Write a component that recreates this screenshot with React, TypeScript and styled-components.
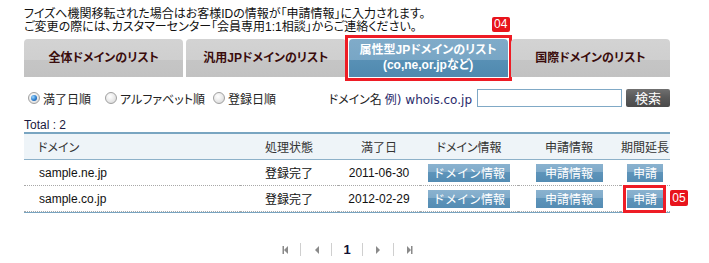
import React from "react";
import styled, { createGlobalStyle } from "styled-components";

const GlobalStyle = createGlobalStyle`
  html, body { margin: 0; padding: 0; background: #fff; }
  body {
    font-family: "Liberation Sans", "Noto Sans CJK JP", sans-serif;
    font-size: 12px;
    color: #222;
    font-feature-settings: "palt";
  }
`;

const Page = styled.div`
  width: 646px;
  padding: 8px 0 0 24px;
`;

const Notice = styled.p`
  margin: 0;
  line-height: 13px;
  color: #111;
`;

const Tabs = styled.div`
  display: grid;
  grid-template-columns: repeat(4, 1fr);
  gap: 3px;
  margin-top: 5px;
  height: 38px;
`;

const Tab = styled.div<{ $active?: boolean }>`
  position: relative;
  display: flex;
  flex-direction: column;
  align-items: center;
  justify-content: center;
  border-radius: 4px 4px 0 0;
  font-weight: bold;
  font-size: 12px;
  line-height: 15px;
  color: ${(p) => (p.$active ? "#fff" : "#3a0c0c")};
  background: ${(p) =>
    p.$active
      ? "linear-gradient(#80abc9 0%, #78a6c5 56%, #5890b5 56%, #4f89af 100%)"
      : "linear-gradient(#d3d3d3 0%, #cfcfcf 56%, #c5c5c5 56%, #c2c2c2 100%)"};

  ${(p) =>
    p.$active &&
    `
    &::after {
      content: "";
      position: absolute;
      inset: -4px;
      border: 3px solid #ee1c25;
      pointer-events: none;
    }
  `}
`;

const Badge = styled.span`
  position: absolute;
  height: 15px;
  padding: 0 2px;
  min-width: 14px;
  text-align: center;
  line-height: 15px;
  font-family: "Liberation Sans", sans-serif;
  font-size: 12px;
  font-weight: normal;
  color: #fff;
  background: #e8141c;
  border-radius: 2px;
  z-index: 2;
`;

const TabBadge = styled(Badge)`
  top: -22px;
  right: -2px;
`;

const Controls = styled.div`
  display: flex;
  align-items: center;
  height: 18px;
  margin-top: 12px;
  padding-left: 4px;
`;

const RadioGroup = styled.div`
  display: grid;
  grid-template-columns: 77px 108px auto;
  align-items: center;
`;

const RadioLabel = styled.label`
  display: flex;
  align-items: center;
  gap: 3px;
  color: #222;
  white-space: nowrap;
`;

const RadioDot = styled.span<{ $checked?: boolean }>`
  position: relative;
  width: 12px;
  height: 12px;
  box-sizing: border-box;
  border-radius: 50%;
  border: 1px solid #a0a0a0;
  background: radial-gradient(circle at 40% 35%, #ffffff 0%, #e6e6e6 60%, #cfcfcf 100%);

  ${(p) =>
    p.$checked &&
    `
    &::after {
      content: "";
      position: absolute;
      left: 2px;
      top: 2px;
      width: 6px;
      height: 6px;
      border-radius: 50%;
      background: radial-gradient(circle at 35% 35%, #9ed8ff 0%, #2c7ccc 55%, #124f96 100%);
    }
  `}
`;

const SearchArea = styled.div`
  margin-left: auto;
  display: flex;
  align-items: center;
`;

const DomainLabel = styled.span`
  margin-right: 5px;
  color: #222;
  white-space: nowrap;
`;

const Example = styled.span`
  margin-left: 3px;
  font-family: "DejaVu Sans", "Noto Sans CJK JP", sans-serif;
  font-size: 12px;
  color: #2b2b6b;
`;

const SearchInput = styled.input`
  width: 145px;
  height: 18px;
  box-sizing: border-box;
  border: 1px solid #80a9c6;
  margin: 0 4px 0 0;
  padding: 0 3px;
  outline: none;
`;

const SearchButton = styled.button`
  width: 44px;
  height: 18px;
  padding: 0;
  border: none;
  border-radius: 2px;
  background: linear-gradient(#707070 0%, #5a5a5a 45%, #4a4a4a 100%);
  color: #fff;
  font-family: "Noto Sans CJK JP", sans-serif;
  font-size: 13px;
  line-height: 18px;
`;

const Total = styled.div`
  margin-top: 11px;
  line-height: 14px;
  color: #1a1a40;
`;

const Table = styled.table`
  width: 646px;
  table-layout: fixed;
  border-collapse: separate;
  border-spacing: 0;
  border-top: 2px solid #79a5c1;
  border-bottom: 1px solid #79a5c1;
`;

const Th = styled.th<{ $left?: boolean }>`
  height: 25px;
  padding: ${(p) => (p.$left ? "0 0 0 14px" : "0")};
  text-align: ${(p) => (p.$left ? "left" : "center")};
  font-weight: normal;
  color: #333;
  background: #eef4f8;
  border-bottom: 1px solid #8db1c9;
`;

const Td = styled.td<{ $left?: boolean }>`
  height: 25px;
  padding: ${(p) => (p.$left ? "0 0 0 15px" : "0")};
  text-align: ${(p) => (p.$left ? "left" : "center")};
  color: #111;
  border-bottom: 1px dotted #a8a8a8;
  vertical-align: middle;
`;

const Mark = styled.span<{ $marked?: boolean }>`
  position: relative;
  display: inline-block;
  vertical-align: middle;
  line-height: 0;

  ${(p) =>
    p.$marked &&
    `
    &::after {
      content: "";
      position: absolute;
      left: -4px;
      right: -3px;
      top: -5px;
      bottom: -5px;
      border: 3px solid #ee1c25;
      pointer-events: none;
    }
  `}
`;

const RowBadge = styled(Badge)`
  left: calc(100% + 7px);
  top: 0;
  height: 16px;
  line-height: 16px;
`;

const ActionButton = styled.button<{ $w: number }>`
  width: ${(p) => p.$w}px;
  height: 18px;
  padding: 0;
  border: none;
  background: linear-gradient(#8ab2cf 0%, #80abca 42%, #5e94ba 46%, #548cb3 100%);
  color: #fff;
  font-family: "Noto Sans CJK JP", sans-serif;
  font-size: 12px;
  line-height: 18px;
`;

const Pagination = styled.div`
  display: flex;
  justify-content: center;
  margin-top: 30px;
`;

const PageItem = styled.span<{ $sep?: boolean }>`
  width: 30px;
  height: 13px;
  display: flex;
  align-items: center;
  justify-content: center;
  border-left: ${(p) => (p.$sep ? "1px solid #cfcfcf" : "none")};
`;

const PageNumber = styled.span`
  font-family: "Liberation Sans", sans-serif;
  font-weight: bold;
  font-size: 13px;
  color: #111133;
`;

type NavKind = "first" | "prev" | "next" | "last";

const NavIcon = ({ kind }: { kind: NavKind }) => {
  const flip = kind === "next" || kind === "last";
  const bar = kind === "first" || kind === "last";
  return (
    <svg width="7" height="8" viewBox="0 0 7 8" style={{ transform: flip ? "scaleX(-1)" : undefined }}>
      {bar && <rect x="0.5" y="0" width="1.5" height="8" fill="#8a8a8a" />}
      <polygon points="6,0 6,8 2,4" fill="#8a8a8a" />
    </svg>
  );
};

type Row = { domain: string; status: string; expire: string; marked?: boolean };

const rows: Row[] = [
  { domain: "sample.ne.jp", status: "登録完了", expire: "2011-06-30" },
  { domain: "sample.co.jp", status: "登録完了", expire: "2012-02-29", marked: true },
];

export default function App() {
  return (
    <>
      <GlobalStyle />
      <Page>
        <Notice>
          フイズへ機関移転された場合はお客様IDの情報が「申請情報」に入力されます。
          <br />
          ご変更の際には、カスタマーセンター「会員専用1:1相談」からご連絡ください。
        </Notice>

        <Tabs>
          <Tab>全体ドメインのリスト</Tab>
          <Tab>汎用JPドメインのリスト</Tab>
          <Tab $active>
            <span>属性型JPドメインのリスト</span>
            <span>(co,ne,or.jpなど)</span>
            <TabBadge>04</TabBadge>
          </Tab>
          <Tab>国際ドメインのリスト</Tab>
        </Tabs>

        <Controls>
          <RadioGroup>
            <RadioLabel>
              <RadioDot $checked />
              満了日順
            </RadioLabel>
            <RadioLabel>
              <RadioDot />
              アルファベット順
            </RadioLabel>
            <RadioLabel>
              <RadioDot />
              登録日順
            </RadioLabel>
          </RadioGroup>
          <SearchArea>
            <DomainLabel>
              ドメイン名<Example>例) whois.co.jp</Example>
            </DomainLabel>
            <SearchInput type="text" />
            <SearchButton>検索</SearchButton>
          </SearchArea>
        </Controls>

        <Total>Total : 2</Total>

        <Table>
          <colgroup>
            <col style={{ width: 216 }} />
            <col style={{ width: 98 }} />
            <col style={{ width: 82 }} />
            <col style={{ width: 98 }} />
            <col style={{ width: 102 }} />
            <col style={{ width: 50 }} />
          </colgroup>
          <thead>
            <tr>
              <Th $left>ドメイン</Th>
              <Th>処理状態</Th>
              <Th>満了日</Th>
              <Th>ドメイン情報</Th>
              <Th>申請情報</Th>
              <Th>期間延長</Th>
            </tr>
          </thead>
          <tbody>
            {rows.map((r) => (
              <tr key={r.domain}>
                <Td $left>{r.domain}</Td>
                <Td>{r.status}</Td>
                <Td>{r.expire}</Td>
                <Td>
                  <ActionButton $w={82}>ドメイン情報</ActionButton>
                </Td>
                <Td>
                  <ActionButton $w={67}>申請情報</ActionButton>
                </Td>
                <Td>
                  <Mark $marked={r.marked}>
                    <ActionButton $w={36}>申請</ActionButton>
                    {r.marked && <RowBadge>05</RowBadge>}
                  </Mark>
                </Td>
              </tr>
            ))}
          </tbody>
        </Table>

        <Pagination>
          <PageItem>
            <NavIcon kind="first" />
          </PageItem>
          <PageItem $sep>
            <NavIcon kind="prev" />
          </PageItem>
          <PageItem $sep>
            <PageNumber>1</PageNumber>
          </PageItem>
          <PageItem $sep>
            <NavIcon kind="next" />
          </PageItem>
          <PageItem $sep>
            <NavIcon kind="last" />
          </PageItem>
        </Pagination>
      </Page>
    </>
  );
}
